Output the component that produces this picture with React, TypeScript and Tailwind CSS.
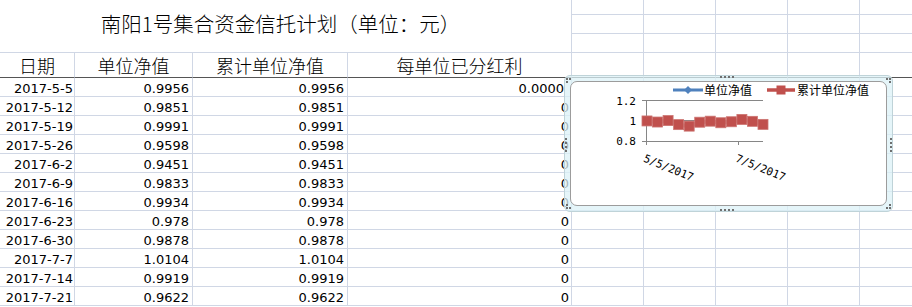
import React from "react";

type Row = [string, string, string, string];

const data: Row[] = [
  ["2017-5-5", "0.9956", "0.9956", "0.0000"],
  ["2017-5-12", "0.9851", "0.9851", "0"],
  ["2017-5-19", "0.9991", "0.9991", "0"],
  ["2017-5-26", "0.9598", "0.9598", "0"],
  ["2017-6-2", "0.9451", "0.9451", "0"],
  ["2017-6-9", "0.9833", "0.9833", "0"],
  ["2017-6-16", "0.9934", "0.9934", "0"],
  ["2017-6-23", "0.978", "0.978", "0"],
  ["2017-6-30", "0.9878", "0.9878", "0"],
  ["2017-7-7", "1.0104", "1.0104", "0"],
  ["2017-7-14", "0.9919", "0.9919", "0"],
  ["2017-7-21", "0.9622", "0.9622", "0"],
];

// empty sheet columns E..I right of the table
const Blank = ({ h, dark }: { h: string; dark?: boolean }) => (
  <>
    {[0, 1, 2, 3].map((i) => (
      <div
        key={i}
        className={`${h} w-[72px] shrink-0 border-r border-b border-r-[#d0d7e5] ${
          dark ? "border-b-[#555555]" : "border-b-[#d0d7e5]"
        }`}
      />
    ))}
    <div className={`${h} flex-1 border-b ${dark ? "border-b-[#555555]" : "border-b-[#d0d7e5]"}`} />
  </>
);

const Head = ({ w, label }: { w: string; label: string }) => (
  <div
    className={`${w} flex h-[25px] shrink-0 items-center justify-center border-r border-b border-r-[#d0d7e5] border-b-[#555555] text-[18px] leading-[24px]`}
  >
    {label}
  </div>
);

const Cell = ({ w, text, pad = "pr-[2px]" }: { w: string; text: string; pad?: string }) => (
  <div
    className={`${w} flex h-[19px] shrink-0 items-end justify-end border-r border-b border-[#d0d7e5] ${pad} leading-[15px]`}
  >
    {text}
  </div>
);

const Dot = () => <span className="h-[2px] w-[2px] bg-[#6f6f6f]" />;
const Gap = () => <span className="h-[2px] w-[2px]" />;

// four-dot grip on the middle of an edge
const Grip = ({ className }: { className: string }) => (
  <div className={`absolute flex gap-[2px] ${className}`}>
    <Dot />
    <Dot />
    <Dot />
    <Dot />
  </div>
);

// three-dot grip on a corner, the empty cell says which corner
const Corner = ({ className, empty }: { className: string; empty: number }) => (
  <div className={`absolute grid grid-cols-2 gap-[1px] ${className}`}>
    {[0, 1, 2, 3].map((i) => (i === empty ? <Gap key={i} /> : <Dot key={i} />))}
  </div>
);

const Chart = () => {
  const vals = data.map((r) => parseFloat(r[2]));
  const pts = vals.map((v, i) => ({ x: 76 + i * 10.545, y: 38.5 - (v - 1) * 102.5 }));
  const line = pts.map((p) => `${p.x},${p.y}`).join(" ");

  return (
    <div className="absolute left-[564px] top-[75px] h-[137px] w-[329px] rounded-[6px] border border-[#bfd3d8] bg-[#dcf2f7]/75 p-[5px]">
      <div className="h-full w-full overflow-hidden rounded-[7px] border border-[#9c9c9c] bg-white">
        <svg width="316" height="124" className="block">
          {/* legend */}
          <line x1="102" y1="8" x2="132" y2="8" stroke="#4f81bd" strokeWidth="3" />
          <polygon points="117,4 121,8 117,12 113,8" fill="#4f81bd" />
          <text x="133" y="12.5" fontSize="12" fontFamily="'Noto Sans CJK SC', sans-serif" fill="#000">
            单位净值
          </text>
          <line x1="196" y1="8" x2="224" y2="8" stroke="#c0504d" strokeWidth="3.5" />
          <rect x="205.5" y="3.5" width="9" height="9" fill="#c0504d" />
          <text x="226" y="12.5" fontSize="12" fontFamily="'Noto Sans CJK SC', sans-serif" fill="#000">
            累计单位净值
          </text>

          {/* axes */}
          <g stroke="#868686" strokeWidth="1">
            <line x1="71" y1="18.5" x2="192" y2="18.5" />
            <line x1="71" y1="38.5" x2="192" y2="38.5" />
            <line x1="71" y1="59.5" x2="192" y2="59.5" />
            <line x1="75.5" y1="18" x2="75.5" y2="63" />
            <line x1="167.5" y1="59" x2="167.5" y2="63" />
          </g>
          <g fontSize="11" fontFamily="'DejaVu Sans Mono', monospace" fill="#000" textAnchor="end">
            <text x="65" y="23">1.2</text>
            <text x="65" y="42.5">1</text>
            <text x="65" y="62.5">0.8</text>
          </g>
          <g fontSize="11" fontFamily="'DejaVu Sans Mono', monospace" fill="#000">
            <text x="75" y="80" transform="rotate(22 75 71)">5/5/2017</text>
            <text x="167" y="80" transform="rotate(22 167 71)">7/5/2017</text>
          </g>

          {/* series: the blue one lies under the red one */}
          <polyline points={line} fill="none" stroke="#4f81bd" strokeWidth="3" />
          {pts.map((p, i) => (
            <polygon
              key={`d${i}`}
              points={`${p.x},${p.y - 4} ${p.x + 4},${p.y} ${p.x},${p.y + 4} ${p.x - 4},${p.y}`}
              fill="#4f81bd"
            />
          ))}
          <polyline points={line} fill="none" stroke="#c0504d" strokeWidth="4" />
          {pts.map((p, i) => (
            <rect
              key={`s${i}`}
              x={p.x - 5}
              y={p.y - 5}
              width="10"
              height="10"
              fill="#c0504d"
              stroke="#cc7471"
              strokeWidth="0.8"
            />
          ))}
        </svg>
      </div>

      {/* selection handles */}
      <Corner className="left-[1px] top-[2px]" empty={3} />
      <Corner className="right-[1px] top-[2px]" empty={2} />
      <Corner className="left-[1px] bottom-[2px]" empty={1} />
      <Corner className="right-[1px] bottom-[2px]" empty={0} />
      <Grip className="left-[155px] top-0" />
      <Grip className="left-[155px] bottom-0" />
      <Grip className="left-0 top-[62px] flex-col" />
      <Grip className="right-0 top-[62px] flex-col" />
    </div>
  );
};

export default function App() {
  return (
    <div className="relative h-[307px] w-[912px] overflow-hidden bg-white font-['DejaVu_Sans',sans-serif] text-[13px] text-black">
      {/* title block */}
      <div className="flex">
        <div className="flex h-[53px] w-[572px] shrink-0 justify-center border-r border-b border-[#d0d7e5] pt-[8px] pr-[10px] font-['Noto_Sans_CJK_SC',sans-serif] text-[20.5px] leading-[30px] font-light">
          南阳1号集合资金信托计划（单位：元）
        </div>
        <div className="flex flex-1 flex-col">
          <div className="flex">
            <Blank h="h-[15px]" />
          </div>
          <div className="flex">
            <Blank h="h-[19px]" />
          </div>
          <div className="flex">
            <Blank h="h-[19px]" />
          </div>
        </div>
      </div>

      {/* header row */}
      <div className="flex font-['Noto_Sans_CJK_SC',sans-serif] font-light">
        <Head w="w-[75px]" label="日期" />
        <Head w="w-[118px]" label="单位净值" />
        <Head w="w-[155px]" label="累计单位净值" />
        <Head w="w-[224px]" label="每单位已分红利" />
        <Blank h="h-[25px]" dark />
      </div>

      {/* data rows */}
      {data.map((r, i) => (
        <div key={r[0]} className="flex">
          <Cell w="w-[75px]" text={r[0]} pad="pr-[1px]" />
          <Cell w="w-[118px]" text={r[1]} pad="pr-[3px]" />
          <Cell w="w-[155px]" text={r[2]} pad="pr-[3px]" />
          <Cell w="w-[224px]" text={r[3]} pad={i === 0 ? "pr-[7px]" : "pr-[2px]"} />
          <Blank h="h-[19px]" />
        </div>
      ))}

      <Chart />
    </div>
  );
}
